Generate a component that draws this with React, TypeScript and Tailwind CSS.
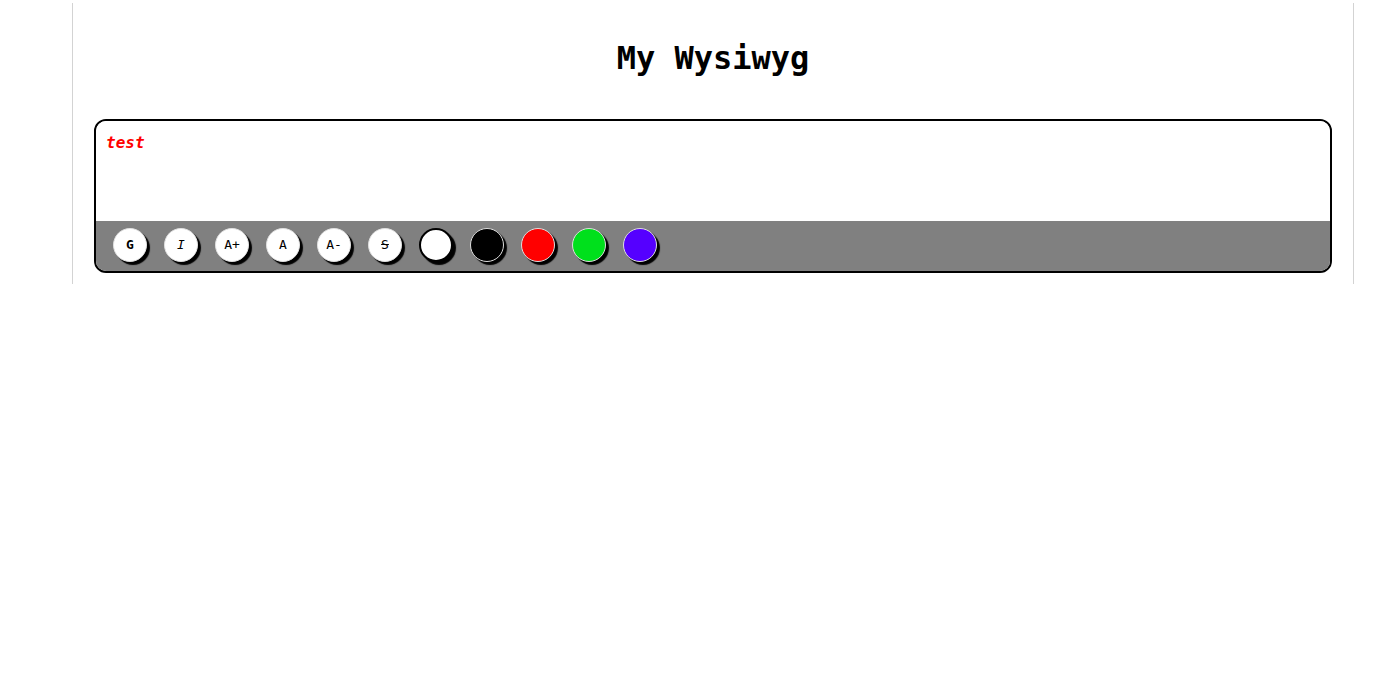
import React from "react";

const mono = { fontFamily: '"DejaVu Sans Mono", monospace' };

export default function App() {
  const textBtns = [
    { label: "G", cls: "font-bold" },
    { label: "I", cls: "italic" },
    { label: "A+", cls: "" },
    { label: "A", cls: "" },
    { label: "A-", cls: "" },
    { label: "S", cls: "line-through" },
  ];
  const colors = ["#000000", "#ff0000", "#00e01c", "#5500ff"];
  return (
    <div className="min-h-[681px] bg-white" style={mono}>
      <div className="ml-[72px] mt-[3px] w-[1282px] border-x border-[#d3d3d3] px-[21px] pt-[37px] pb-[11px]">
        <h1 className="text-center text-[32px] font-bold leading-[37px] text-black mb-[42px]">
          My Wysiwyg
        </h1>
        <div className="rounded-[12px] border-2 border-black overflow-hidden">
          <div className="h-[100px] bg-white px-[10px] pt-[10px]">
            <span className="text-[16px] font-bold italic text-[#ff0000]">test</span>
          </div>
          <div className="h-[50px] bg-[#808080] flex items-start gap-[17px] pl-[17px] pt-[7px]">
            {textBtns.map((b) => (
              <button
                key={b.label}
                className={`w-[34px] h-[34px] rounded-full bg-white border border-[#e0e0e0] shadow-[3px_3px_1px_#000] text-[13px] text-black flex items-center justify-center ${b.cls}`}
              >
                {b.label}
              </button>
            ))}
            <button className="w-[34px] h-[34px] rounded-full bg-white border-2 border-black shadow-[3px_3px_1px_#000]" />
            {colors.map((c) => (
              <button
                key={c}
                className="w-[34px] h-[34px] rounded-full border border-[#dddddd] shadow-[3px_3px_1px_#000]"
                style={{ backgroundColor: c }}
              />
            ))}
          </div>
        </div>
      </div>
    </div>
  );
}
